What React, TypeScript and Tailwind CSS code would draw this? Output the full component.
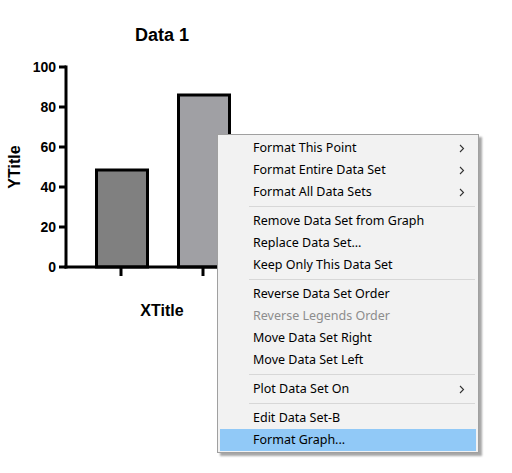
import React from "react";

type Item = { label: string; sub?: boolean; disabled?: boolean; active?: boolean } | "sep";

const MENU: Item[] = [
  { label: "Format This Point", sub: true },
  { label: "Format Entire Data Set", sub: true },
  { label: "Format All Data Sets", sub: true },
  "sep",
  { label: "Remove Data Set from Graph" },
  { label: "Replace Data Set..." },
  { label: "Keep Only This Data Set" },
  "sep",
  { label: "Reverse Data Set Order" },
  { label: "Reverse Legends Order", disabled: true },
  { label: "Move Data Set Right" },
  { label: "Move Data Set Left" },
  "sep",
  { label: "Plot Data Set On", sub: true },
  "sep",
  { label: "Edit Data Set-B" },
  { label: "Format Graph...", active: true },
];

function Chart() {
  const ticks = [0, 20, 40, 60, 80, 100];
  const y = (v: number) => 267 - v * 2;
  return (
    <svg width="512" height="473" className="block" style={{ fontFamily: "'Liberation Sans', Arial, sans-serif" }}>
      <text x="162" y="41" textAnchor="middle" fontSize="18" fontWeight="700" fill="#000">
        Data 1
      </text>
      {/* bars */}
      <rect x="96.5" y={y(48.5)} width="51" height={267 - y(48.5)} fill="#808080" stroke="#000" strokeWidth="3" />
      <rect x="178.5" y={y(86)} width="51" height={267 - y(86)} fill="#a0a0a4" stroke="#000" strokeWidth="3" />
      {/* y axis */}
      <line x1="66" y1="65.5" x2="66" y2="268.5" stroke="#000" strokeWidth="3" />
      {ticks.map((t) => (
        <g key={t}>
          <line x1="59" y1={y(t)} x2="66" y2={y(t)} stroke="#000" strokeWidth="3" />
          <text x="56" y={y(t) + 5} textAnchor="end" fontSize="14" fontWeight="700" fill="#000">
            {t}
          </text>
        </g>
      ))}
      {/* x axis */}
      <line x1="64.5" y1="267" x2="260" y2="267" stroke="#000" strokeWidth="3" />
      <line x1="121" y1="267" x2="121" y2="276" stroke="#000" strokeWidth="3" />
      <line x1="203" y1="267" x2="203" y2="276" stroke="#000" strokeWidth="3" />
      <text x="162" y="316" textAnchor="middle" fontSize="16" fontWeight="700" fill="#000">
        XTitle
      </text>
      <text
        x="20"
        y="167"
        textAnchor="middle"
        fontSize="16"
        fontWeight="700"
        fill="#000"
        transform="rotate(-90 20 167)"
      >
        YTitle
      </text>
    </svg>
  );
}

function Chevron() {
  return (
    <svg width="6" height="9" viewBox="0 0 6 9" className="absolute right-[11px] top-[7px]">
      <path d="M1 1 L4.5 4.5 L1 8" fill="none" stroke="#333" strokeWidth="1.1" />
    </svg>
  );
}

function ContextMenu() {
  return (
    <div
      className="absolute left-[217px] top-[134px] w-[262px] border border-[#a0a0a0] bg-[#f2f2f2] pt-[2px] pb-[1px] pl-[2px] pr-[2px] shadow-[3px_3px_2px_rgba(0,0,0,0.35)]"
      style={{ fontFamily: "'Noto Sans', 'Open Sans', sans-serif" }}
    >
      {MENU.map((it, i) =>
        it === "sep" ? (
          <div key={i} className="flex h-[7px] items-center pl-[29px] pr-[1px]">
            <div className="h-px w-full bg-[#d7d7d7]" />
          </div>
        ) : (
          <div
            key={i}
            className={`relative flex h-[22px] items-center pl-[33px] text-[12.5px] ${
              it.active ? "bg-[#91c9f7]" : ""
            } ${it.disabled ? "text-[#8d8d8d]" : "text-[#000]"}`}
          >
            {it.label}
            {it.sub && <Chevron />}
          </div>
        )
      )}
    </div>
  );
}

export default function App() {
  return (
    <div className="relative h-[473px] w-[512px] overflow-hidden bg-white">
      <Chart />
      <ContextMenu />
    </div>
  );
}
